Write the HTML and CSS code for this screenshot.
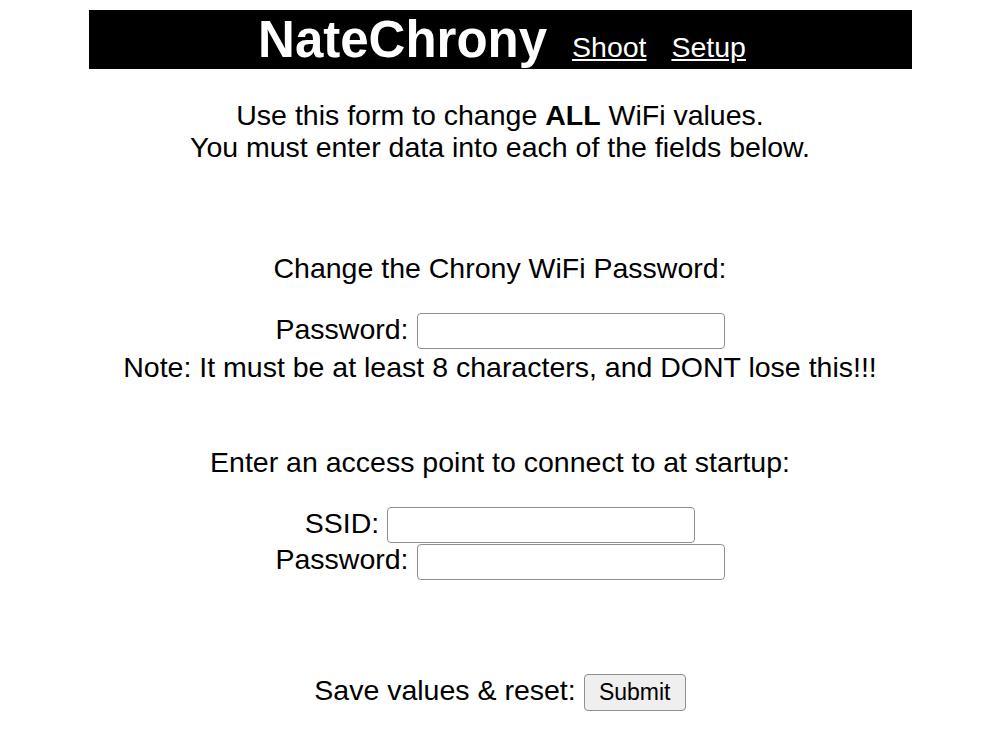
FILE: index.html
```html
<!DOCTYPE html>
<html lang="en">
<head>
  <meta charset="UTF-8">
  <meta name="viewport" content="width=device-width, initial-scale=1.0">
  <title>NateChrony - Setup</title>
  <link rel="stylesheet" href="styles.css">
</head>
<body>
  <header class="topbar">
    <span class="brand">NateChrony</span>
    <a href="#" class="nav">Shoot</a>
    <a href="#" class="nav">Setup</a>
  </header>

  <form class="wifi-form">
    <p class="intro">Use this form to change <b>ALL</b> WiFi values.<br>You must enter data into each of the fields below.</p>

    <!-- chrony access point password -->
    <div class="heading first">Change the Chrony WiFi Password:</div>
    <div class="row pass-row">
      <label for="appass">Password:</label>
      <input type="password" id="appass" name="appass">
    </div>
    <div class="note">Note: It must be at least 8 characters, and DONT lose this!!!</div>

    <!-- station to join -->
    <div class="heading second">Enter an access point to connect to at startup:</div>
    <div class="row ssid-row">
      <label for="ssid">SSID:</label>
      <input type="text" id="ssid" name="ssid">
    </div>
    <div class="row">
      <label for="stapass">Password:</label>
      <input type="password" id="stapass" name="stapass">
    </div>

    <div class="row save-row">
      <span>Save values &amp; reset:</span>
      <button type="submit" class="submit">Submit</button>
    </div>
  </form>
</body>
</html>
```

FILE: styles.css
```css
body { margin: 0; font-family: "Liberation Sans", Arial, sans-serif; font-size: 28.5px; color: #000; background: #fff; }

.topbar { width: 823px; margin: 10px auto 0; background: #000; color: #fff; text-align: center; line-height: normal; }
.brand { font-size: 51px; font-weight: bold; margin-left: 4px; }
.nav { color: #fff; text-decoration: underline; margin-left: 17px; }

.wifi-form { text-align: center; }
.intro { margin: 30px 0 0; line-height: 32.2px; }
.heading { line-height: 32.2px; }
.heading.first { margin-top: 89px; }
.heading.second { margin-top: 63px; }

.row { display: flex; justify-content: center; align-items: baseline; gap: 8px; }
.pass-row { margin-top: 28px; }
.ssid-row { margin-top: 28px; }
.save-row { margin-top: 94px; }
.note { margin-top: 2px; line-height: 32.2px; }

.row input { box-sizing: border-box; width: 308px; height: 36px; padding: 0 4px; font-family: "Liberation Sans", Arial, sans-serif; font-size: 23px; border: 1px solid #8f8f8f; border-radius: 4px; background: #fff; }
.submit { box-sizing: border-box; width: 102px; height: 37px; padding: 0; font-family: "Liberation Sans", Arial, sans-serif; font-size: 23px; color: #000; background: #efefef; border: 1px solid #8f8f8f; border-radius: 4px; }
```
